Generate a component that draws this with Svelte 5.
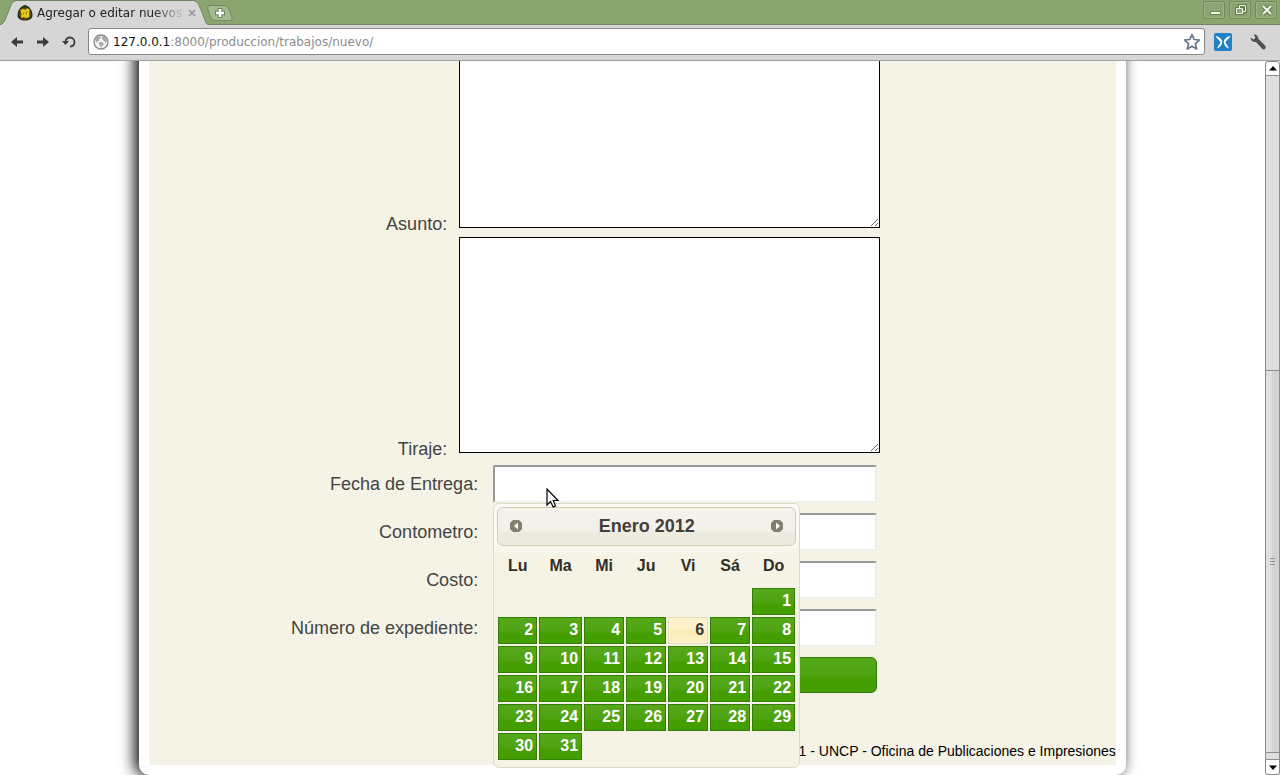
<script>
  const weekdays = ['Lu', 'Ma', 'Mi', 'Ju', 'Vi', 'Sá', 'Do'];
  const today = 6;
  const firstColumn = 6;
  const weeks = Array.from({ length: 6 }, (_, w) =>
    Array.from({ length: 7 }, (_, d) => {
      const n = w * 7 + d - firstColumn + 1;
      return n >= 1 && n <= 31 ? n : null;
    })
  );
  const areas = [
    { id: 'asunto', label: 'Asunto:' },
    { id: 'tiraje', label: 'Tiraje:' }
  ];
  const fields = [
    { id: 'fecha', label: 'Fecha de Entrega:' },
    { id: 'contometro', label: 'Contometro:' },
    { id: 'costo', label: 'Costo:' },
    { id: 'expediente', label: 'Número de expediente:' }
  ];
</script>

<div class="browser">
  <header class="tabs">
    <div class="tab">
      <svg class="tabshape" width="208" height="25" viewBox="0 0 208 25" aria-hidden="true">
        <path d="M0 25 C3 24 4 22 5 20 L11 5 Q12 1 16 1 H194 Q197 1 199 5 L205 20 Q206 24 208 25Z" fill="#d6d6d6" />
        <path d="M0 24.5 C3 24 4 22 5 20 L11 5 Q12 1 16 .5 H194 Q197 1 199 5 L205 20 Q206 24 208 24.5" fill="none" stroke="#718561" />
      </svg>
      <svg class="favicon" width="16" height="16" viewBox="0 0 16 16" aria-hidden="true">
        <path d="M8 0 C12 1 15.500 5 15.500 10 C15.500 14 12 15.500 8 15.500 S.5 14 .5 10 C.5 5 4 1 8 0Z" fill="#17370d" />
        <ellipse cx="8" cy="8.500" rx="6" ry="6" fill="#7a4410" />
        <path d="M3.500 5 L6 4 8 5 10 3.500 12.500 4 12 8 12.500 12 9 13 7 12 4 13 4.500 9Z" fill="#e6cd16" />
        <path d="M6 10 L7 7 M9 10 L10 6" fill="none" stroke="#a08a0c" />
      </svg>
      <span class="title">Agregar o editar nuevos</span>
      <button class="close" aria-label="Cerrar pestaña">
        <svg width="8" height="8" viewBox="0 0 8 8"><path d="M1 1 L7 7 M7 1 L1 7" stroke="#969696" stroke-width="1.600" /></svg>
      </button>
    </div>
    <button class="newtab" aria-label="Nueva pestaña">
      <svg width="26" height="16" viewBox="0 0 26 16">
        <path d="M3 .5 H18 Q20 .5 21 2.500 L25 12 Q26 15.500 23 15.500 H8 Q5 15.500 4 13 L.7 4 Q0 .5 3 .5Z" fill="#a5ba91" stroke="#71895c" />
        <path d="M13 3 V13 M8 8 H18" stroke="#71805f" stroke-width="4.500" />
        <path d="M13 4 V12 M9 8 H17" stroke="#fff" stroke-width="2.500" />
      </svg>
    </button>
    <div class="winbuttons">
      <button aria-label="Minimizar"><svg width="22" height="16" viewBox="0 0 22 16"><path d="M6.500 9.500 H16.500 V12.500 H6.500Z" fill="#f6f7ee" stroke="#6d8255" /></svg></button>
      <button aria-label="Restaurar"><svg width="22" height="16" viewBox="0 0 22 16"><g fill="none"><path d="M9.500 3.500 H15.500 V9.500 H9.500Z M6.500 6.500 H12.500 V11.500 H6.500Z" stroke="#667c50" stroke-width="3" /><path d="M9.500 3.500 H15.500 V9.500 H9.500Z" stroke="#f2f3e8" /><path d="M6.500 6.500 H12.500 V11.500 H6.500Z" fill="#8aa570" stroke="#f2f3e8" /></g></svg></button>
      <button aria-label="Cerrar"><svg width="22" height="16" viewBox="0 0 22 16"><path d="M7 4 L15 12 M15 4 L7 12" stroke="#667c50" stroke-width="4" /><path d="M7 4 L15 12 M15 4 L7 12" stroke="#f6f7ee" stroke-width="2" /></svg></button>
    </div>
  </header>

  <nav class="toolbar">
    <button aria-label="Atrás"><svg width="14" height="12" viewBox="0 0 14 12"><path d="M1 6 L7 1 V4.500 H13 V7.500 H7 V11Z" fill="#3c3c3c" /></svg></button>
    <button aria-label="Adelante"><svg width="14" height="12" viewBox="0 0 14 12"><path d="M13 6 L7 1 V4.500 H1 V7.500 H7 V11Z" fill="#3c3c3c" /></svg></button>
    <button aria-label="Recargar"><svg width="14" height="12" viewBox="0 0 14 12"><path d="M3.500 6 C3.500 2.500 6 1.500 8 1.500 C11 1.500 12.500 4 12.500 6 C12.500 8.500 11 10.500 8 10.500" fill="none" stroke="#3c3c3c" stroke-width="1.800" /><path d="M0 5 H7 L3.500 9Z" fill="#3c3c3c" /></svg></button>
    <div class="address">
      <svg width="16" height="16" viewBox="0 0 16 16" aria-hidden="true">
        <circle cx="8" cy="8" r="7" fill="#f3f3f3" stroke="#888" stroke-width="1.300" />
        <path d="M2 5 L4 3 7 2 8 4 6 5 6 7 4 7 5 9 3 8Z M6 8 L9 8 11 10 9 12 8 14 7 12 6 10Z M9 2 L12 3 14 6 13 9 11 7 9 5Z" fill="#a9a9a9" />
      </svg>
      <span class="url">127.0.0.1<span>:8000/produccion/trabajos/nuevo/</span></span>
      <svg width="18" height="18" viewBox="0 0 18 18" aria-hidden="true"><path d="M9 1.500 L11.100 6.500 16.500 7 12.500 10.700 13.700 16 9 13.200 4.300 16 5.500 10.700 1.500 7 6.900 6.500Z" fill="#fff" stroke="#69748b" stroke-width="1.700" stroke-linejoin="round" /></svg>
    </div>
    <svg class="ext" width="18" height="18" viewBox="0 0 18 18" aria-hidden="true">
      <rect width="18" height="18" rx="2" fill="#2080c8" />
      <path d="M1.500 3 C5 3.500 8 6 8.300 9 C8 12 6 14.500 3 15.500 C4 13 6 11 6.500 9 C5.500 7 3 6 1.500 3Z M16.500 3 C13 3.500 10 6 9.700 9 C10 12 12 14.500 15 15.500 C14 13 12 11 11.500 9 C12.500 7 15 6 16.500 3Z" fill="#fff" />
    </svg>
    <button class="wrench" aria-label="Herramientas"><svg width="18" height="18" viewBox="0 0 18 18"><path d="M4.500 1.500 C7 1 9.500 3 9.500 6 L16 12.500 Q17.500 14.500 16 16 Q14.500 17 13 15.500 L7 9 C4 9.500 1.500 7.500 1.500 4.500 L4.500 6.500 6.500 4.500Z" fill="#505050" /></svg></button>
  </nav>

  <div class="viewport">
    <main class="page">
      <div class="sheet">
        <form class="content">
          {#each areas as a}
            <div class="row arearow">
              <label for={a.id}>{a.label}</label>
              <textarea id={a.id}></textarea>
            </div>
          {/each}
          {#each fields as f}
            <div class="row">
              <label for={f.id}>{f.label}</label>
              <div class="field">
                <input id={f.id} type="text" />
                {#if f.id === 'fecha'}
                  <div class="picker">
                    <div class="pickhead">
                      <button type="button" aria-label="Anterior"><svg width="12" height="12" viewBox="0 0 12 12"><path d="M3 0 H9 L12 3 V9 L9 12 H3 L0 9 V3Z" fill="#847e71" /><path d="M8 2.500 V9.500 L4 6Z" fill="#fff" /></svg></button>
                      <strong>Enero 2012</strong>
                      <button type="button" aria-label="Siguiente"><svg width="12" height="12" viewBox="0 0 12 12"><path d="M3 0 H9 L12 3 V9 L9 12 H3 L0 9 V3Z" fill="#847e71" /><path d="M5 2.500 V9.500 L9 6Z" fill="#fff" /></svg></button>
                    </div>
                    <table>
                      <thead>
                        <tr>{#each weekdays as d}<th scope="col">{d}</th>{/each}</tr>
                      </thead>
                      <tbody>
                        {#each weeks as week}
                          <tr>
                            {#each week as n}
                              <td>{#if n}<a href="#{n}" class:today={n === today}>{n}</a>{/if}</td>
                            {/each}
                          </tr>
                        {/each}
                      </tbody>
                    </table>
                  </div>
                  <svg class="cursor" width="14" height="22" viewBox="0 0 14 22" aria-hidden="true"><path d="M1 1 V17 L4.500 13.500 L7.200 19 L9.500 18 L7.300 12.500 H12Z" fill="#fff" stroke="#000" stroke-width="1.200" /></svg>
                {/if}
              </div>
            </div>
          {/each}
          <div class="row">
            <span></span>
            <button class="save" type="submit" aria-label="Guardar"></button>
          </div>
          <footer>2011 - UNCP - Oficina de Publicaciones e Impresiones</footer>
        </form>
      </div>
    </main>
    <div class="scrollbar" aria-hidden="true">
      <div class="arrow up"><svg width="8" height="5" viewBox="0 0 8 5"><path d="M4 0 L8 4.500 H0Z" /></svg></div>
      <div class="before"></div>
      <div class="thumb"><i></i><i></i><i></i></div>
      <div class="after"></div>
      <div class="arrow down"><svg width="8" height="5" viewBox="0 0 8 5"><path d="M4 5 L8 .5 H0Z" /></svg></div>
    </div>
  </div>
</div>

<style>
  :global(body) { margin: 0; background: #fff; }
  * { box-sizing: border-box; }
  button { padding: 0; border: 0; background: none; font: inherit; }
  svg { display: block; flex: none; }
  .browser { display: flex; flex-direction: column; height: 100vh; overflow: hidden; font-family: "DejaVu Sans", sans-serif; font-size: 12px; }
  .tabs { display: flex; height: 25px; flex: none; background: #8aa570; border-bottom: 1px solid #718561; }
  .tab { position: relative; display: flex; align-items: center; width: 208px; height: 25px; padding: 1px 13px 0 17px; }
  .tabshape { position: absolute; left: 0; top: 0; }
  .favicon { position: relative; margin-right: 4px; }
  .title { position: relative; flex: 1; white-space: nowrap; color: #222; mask-image: linear-gradient(90deg, #000 115px, transparent 148px); }
  .close { position: relative; margin-left: 6px; }
  .newtab { align-self: flex-start; margin: 5px 0 0 -1px; }
  .winbuttons { display: flex; gap: 4px; margin: 1px 3px 0 auto; }
  .winbuttons button { display: grid; place-items: center; width: 22px; height: 18px; border: 1px solid #72885d; border-radius: 2px; box-shadow: inset 0 0 0 1px #9bb286; }
  .toolbar { display: flex; align-items: center; flex: none; height: 36px; padding: 0 13px 2px 10px; background: #d6d6d6; border-bottom: 1px solid #a0a0a0; }
  .toolbar > button { margin-right: 12px; }
  .address { display: flex; align-items: center; flex: 1; height: 27px; padding: 0 3px 0 4px; background: #fff; border: 1px solid #888; border-radius: 3px; }
  .url { flex: 1; margin-left: 4px; color: #111; }
  .url span { color: #8c8c8c; }
  .ext { margin: 0 17px 0 9px; }
  .toolbar .wrench { margin: 0; }

  .viewport { display: flex; flex: 1; min-height: 0; font-family: "Liberation Sans", Arial, sans-serif; }
  .page { display: flex; flex: 1; flex-direction: column; justify-content: flex-end; align-items: center; min-height: 0; overflow: hidden; }
  .sheet { flex: none; width: 78%; padding: 10px; background: #fff; border-radius: 10px; box-shadow: -4px 0 15px #000; }
  .content { padding-top: 20px; background: #f5f3e5; }
  .row { display: grid; grid-template-columns: 329px 384px; column-gap: 15px; align-items: center; margin-bottom: 10px; }
  .arearow { grid-template-columns: 298px 421px; column-gap: 12px; align-items: end; margin-bottom: 9px; }
  .arearow + .row:not(.arearow) { margin-top: 12px; }
  label { text-align: right; font-size: 18px; line-height: 20px; color: #444; white-space: nowrap; }
  .arearow label { margin-bottom: -6px; }
  textarea { display: block; width: 100%; height: 216px; border: 1px solid #000; background: #fff; outline: 0; }
  .field { position: relative; }
  input { display: block; width: 100%; height: 38px; border: 2px solid; border-color: #999 #eee #eee #999; border-radius: 2px; background: #fff; outline: 0; }
  .save { height: 36px; border: 1px solid #327e04; border-radius: 6px; background: linear-gradient(#57a81b, #4fa312 50%, #459e00 60%, #459e00); }
  footer { padding: 39px 0 5px; text-align: right; font-size: 14px; line-height: 18px; color: #000; }

  .picker { position: absolute; z-index: 1; top: 38px; left: 0; padding: 3px 3px 6px; border: 1px solid #dfd9c3; border-radius: 6px; background: linear-gradient(#fbfaf4, #fbfaf4 36px, #f5f3e5 52px); }
  .pickhead { display: flex; align-items: center; justify-content: space-between; height: 39px; padding: 0 12px 1px; border: 1px solid #d4ccb0; border-radius: 6px; background: linear-gradient(#f5f2ec, #f3f0e9 62%, #eeebe0 66%, #ece9dc); }
  .pickhead strong { font-size: 18px; color: #433f38; }
  table { table-layout: fixed; width: 299px; border-collapse: collapse; }
  th { height: 41px; padding: 0 0 2px; font-size: 16px; color: #312e25; }
  th, td { width: 42px; }
  th:first-child { width: 41px; }
  th:nth-child(2), th:last-child { width: 45px; }
  td { height: 29px; padding: 1px; }
  td a { display: block; height: 27px; padding-right: 3px; border: 1px solid #327e04; background: linear-gradient(#57a81b, #4fa312 50%, #459e00 65%, #459e00); color: #fff; font-size: 16px; font-weight: bold; line-height: 24px; text-align: right; text-decoration: none; }
  td a.today { border-color: #e8e1b5; background: linear-gradient(#fcf2ce, #fcf0c7 48%, #fbecb5 52%, #fbf0c9); color: #363636; }
  .cursor { position: absolute; z-index: 2; left: 53px; top: 23px; }

  .scrollbar { display: flex; flex-direction: column; flex: none; width: 15px; border: 1px solid #8c8c8c; border-top: 0; border-radius: 3px; background: #dedede; }
  .arrow { display: grid; place-items: center; height: 15px; background: #fff; }
  .up { border-top: 1px solid #8c8c8c; border-bottom: 1px solid #8c8c8c; border-radius: 3px 3px 0 0; }
  .down { border-top: 1px solid #8c8c8c; border-radius: 0 0 3px 3px; }
  .before { flex: 295; }
  .thumb { display: flex; flex-direction: column; align-items: center; justify-content: center; gap: 2px; flex: 382; border: solid #8c8c8c; border-width: 1px 0; background: linear-gradient(90deg, #e0e0e0 50%, #d3d3d3 50%); }
  .thumb i { width: 5px; height: 1px; background: #929292; }
  .after { flex: 6; }
</style>
